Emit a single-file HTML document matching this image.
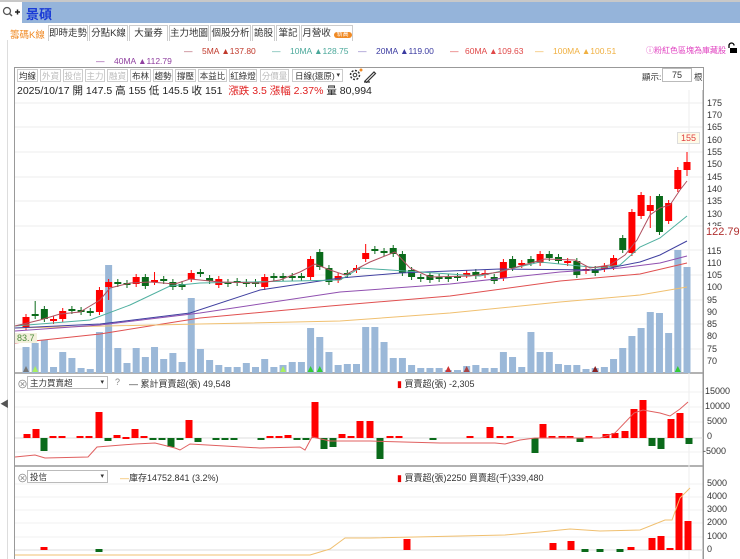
<!DOCTYPE html>
<html><head><meta charset="utf-8">
<style>
*{margin:0;padding:0;box-sizing:border-box}
body{width:740px;height:559px;overflow:hidden;background:#fff;font-family:"Liberation Sans","Noto Sans CJK TC",sans-serif;position:relative;font-size:11px;color:#333}
.abs{position:absolute;white-space:nowrap}
#band{left:0;top:2px;width:740px;height:21px;background:#95b4da}
#srch{left:0;top:2px;width:22px;height:21px;background:#fff}
#title{left:26px;top:4px;font-size:13px;font-weight:bold;color:#1a3bd6}
.tab{position:absolute;top:25px;height:16px;border:1px solid #ccc;border-bottom:none;font-size:9.5px;line-height:15px;text-align:center;color:#333;background:#fff;overflow:hidden}
.tb{position:absolute;top:69px;height:13px;font-size:8.5px;line-height:12px;color:#333;border:1px solid #ccc;text-align:center;background:#fff;overflow:hidden}
.tb.g{color:#bbb}
.ax{position:absolute;font-size:9px;color:#333}
.ma{position:absolute;font-size:8.5px;white-space:nowrap}
</style></head><body>
<div class="abs" style="left:0;top:0;width:740px;height:2px;background:#c8c8c8"></div>
<div class="abs" id="band"></div>
<div class="abs" id="srch"><svg width="22" height="21"><circle cx="7" cy="9" r="3.5" fill="none" stroke="#555" stroke-width="1.3"/><line x1="9.5" y1="11.5" x2="12" y2="14" stroke="#555" stroke-width="1.5"/><path d="M15 10h5M17.5 7.5v5" stroke="#222" stroke-width="1.5"/></svg></div>
<div class="abs" id="title">景碩</div>
<div class="abs" style="left:7px;top:40px;width:1px;height:519px;background:#ddd"></div>

<div class="abs" style="left:10px;top:27px;font-size:9.5px;color:#f08a24">籌碼K線</div>
<div class="tab" style="left:48px;width:40px">即時走勢</div>
<div class="tab" style="left:89px;width:39px">分點K線</div>
<div class="tab" style="left:129px;width:39px">大量券商</div>
<div class="tab" style="left:169px;width:40px">主力地圖</div>
<div class="tab" style="left:210px;width:41px">個股分析</div>
<div class="tab" style="left:252px;width:23px">詭股</div>
<div class="tab" style="left:276px;width:24px">筆記</div>
<div class="tab" style="left:301px;width:52px">月營收 <span style="background:#f08a24;color:#fff;border-radius:6px;font-size:6px;padding:0 3px">新高</span></div>

<div class="ma" style="top:46px;left:184px;color:#b05060">—</div><div class="ma" style="top:46px;left:202px;color:#c0392b">5MA ▲137.80</div>
<div class="ma" style="top:46px;left:272px;color:#4aa89a">—</div><div class="ma" style="top:46px;left:290px;color:#4aa89a">10MA ▲128.75</div>
<div class="ma" style="top:46px;left:358px;color:#8070c0">—</div><div class="ma" style="top:46px;left:376px;color:#3a3aa0">20MA ▲119.00</div>
<div class="ma" style="top:46px;left:450px;color:#e04848">—</div><div class="ma" style="top:46px;left:465px;color:#e04848">60MA ▲109.63</div>
<div class="ma" style="top:46px;left:535px;color:#f0b040">—</div><div class="ma" style="top:46px;left:553px;color:#f0b040">100MA ▲100.51</div>
<div class="ma" style="top:45px;left:646px;color:#e040c0;font-size:8px">ⓘ粉紅色區塊為庫藏股</div>
<svg class="abs" style="left:726px;top:42px" width="12" height="12"><path d="M3 6V3.5a2.5 2.5 0 0 1 5 0" fill="none" stroke="#000" stroke-width="1.3"/><rect x="4" y="6" width="7" height="5" fill="#000"/></svg>
<div class="ma" style="top:56px;left:96px;color:#9040a0">—</div><div class="ma" style="top:56px;left:114px;color:#9040a0">40MA ▲112.79</div>

<div class="abs" style="left:14px;top:67px;width:690px;height:492px;border:1px solid #999;border-bottom:none"></div>
<div class="tb" style="left:17px;width:21px">均線</div><div class="tb g" style="left:40px;width:21px">外資</div><div class="tb g" style="left:63px;width:20px">投信</div><div class="tb g" style="left:85px;width:20px">主力</div><div class="tb g" style="left:107px;width:21px">融資</div><div class="tb" style="left:130px;width:21px">布林</div><div class="tb" style="left:153px;width:20px">趨勢</div><div class="tb" style="left:175px;width:21px">撐壓</div><div class="tb" style="left:198px;width:29px">本益比</div><div class="tb" style="left:229px;width:28px">紅綠燈</div><div class="tb g" style="left:260px;width:29px">分價量</div>
<div class="tb" style="left:292px;width:51px;text-align:left;padding-left:2px">日線(還原)<span style="float:right;padding-right:2px;font-size:7px">▾</span></div>
<svg class="abs" style="left:348px;top:67px" width="30" height="16"><circle cx="7" cy="8" r="4.5" fill="none" stroke="#333" stroke-width="1.5" stroke-dasharray="2 1.5"/><circle cx="7" cy="8" r="1.8" fill="none" stroke="#333"/><circle cx="13" cy="3" r="1.5" fill="#f08a24"/><path d="M17 14l9-9 1.5 1.5-9 9zM16 15h6" stroke="#333" fill="none" stroke-width="1.2"/></svg>
<div class="abs" style="left:642px;top:71px;font-size:8.5px">顯示:</div>
<div class="abs" style="left:662px;top:68px;width:30px;height:14px;border:1px solid #bbb;font-size:9px;text-align:center;line-height:13px">75</div>
<div class="abs" style="left:694px;top:71px;font-size:8.5px">根</div>
<div class="abs" style="left:17px;top:83px;font-size:10.5px;color:#222">2025/10/17 開 147.5 高 155 低 145.5 收 151 &nbsp;<span style="color:#e02020">漲跌 3.5 漲幅 2.37%</span> 量 80,994</div>

<svg class="abs" style="left:0;top:0" width="740" height="559" id="sv"></svg>

<div class="ax" style="left:707px;top:98px">175</div><div class="ax" style="left:707px;top:110px">170</div><div class="ax" style="left:707px;top:122px">165</div><div class="ax" style="left:707px;top:135px">160</div><div class="ax" style="left:707px;top:147px">155</div><div class="ax" style="left:707px;top:159px">150</div><div class="ax" style="left:707px;top:172px">145</div><div class="ax" style="left:707px;top:184px">140</div><div class="ax" style="left:707px;top:196px">135</div><div class="ax" style="left:707px;top:209px">130</div><div class="ax" style="left:707px;top:221px">125</div><div class="ax" style="left:707px;top:258px">110</div><div class="ax" style="left:707px;top:270px">105</div><div class="ax" style="left:707px;top:282px">100</div><div class="ax" style="left:707px;top:295px">95</div><div class="ax" style="left:707px;top:307px">90</div><div class="ax" style="left:707px;top:319px">85</div><div class="ax" style="left:707px;top:331px">80</div><div class="ax" style="left:707px;top:344px">75</div><div class="ax" style="left:707px;top:356px">70</div>
<div class="ax" style="left:707px;top:246px">115</div>
<div class="abs" style="left:706px;top:226px;font-size:11px;color:#b03030;background:#fff">122.79</div>
<div class="abs" style="left:677px;top:132px;font-size:9px;color:#e04040;border:1px solid #ddd;background:#fffbe8;padding:0 3px">155</div>
<div class="abs" style="left:15px;top:333px;font-size:9px;color:#4a8a3a;background:#f3f0dc;padding:0 2px">83.7</div>

<div class="abs" style="left:17px;top:376px;font-size:11px;color:#888">⊗</div>
<div class="abs" style="left:27px;top:376px;width:81px;height:13px;border:1px solid #bbb;font-size:8.5px;line-height:12px;padding-left:2px">主力買賣超 <span style="float:right;padding-right:3px;font-size:7px">▾</span></div>
<div class="abs" style="left:115px;top:377px;font-size:9px;color:#888">?</div>
<div class="abs" style="left:129px;top:377px;font-size:9px">— 累計買賣超(張) 49,548</div>
<div class="abs" style="left:397px;top:377px;font-size:9px"><span style="color:#e00">▮</span> 買賣超(張) -2,305</div>
<div class="ax" style="left:705px;top:386px">15000</div><div class="ax" style="left:705px;top:401px">10000</div><div class="ax" style="left:707px;top:416px">5000</div><div class="ax" style="left:707px;top:431px">0</div><div class="ax" style="left:703px;top:446px">-5000</div>

<div class="abs" style="left:17px;top:470px;font-size:11px;color:#888">⊗</div>
<div class="abs" style="left:27px;top:470px;width:81px;height:13px;border:1px solid #bbb;font-size:8.5px;line-height:12px;padding-left:2px">投信 <span style="float:right;padding-right:3px;font-size:7px">▾</span></div>
<div class="abs" style="left:120px;top:471px;font-size:9px"><span style="color:#f0b040">—</span>庫存14752.841 (3.2%)</div>
<div class="abs" style="left:397px;top:471px;font-size:9px"><span style="color:#e00">▮</span> 買賣超(張)2250 買賣超(千)339,480</div>
<div class="ax" style="left:707px;top:478px">5000</div><div class="ax" style="left:707px;top:491px">4000</div><div class="ax" style="left:707px;top:504px">3000</div><div class="ax" style="left:707px;top:517px">2000</div><div class="ax" style="left:707px;top:531px">1000</div><div class="ax" style="left:707px;top:544px">0</div>
<div class="abs" style="left:0;top:397px;font-size:9px;color:#555">◀</div>

<script>
var s='';
function L(x1,y1,x2,y2,c,w){s+='<line x1="'+x1+'" y1="'+y1+'" x2="'+x2+'" y2="'+y2+'" stroke="'+c+'" stroke-width="'+(w||1)+'"/>';}
function R(x,y,w,h,c){s+='<rect x="'+x+'" y="'+y+'" width="'+w+'" height="'+h+'" fill="'+c+'"/>';}
function P(pts,c,w){s+='<polyline fill="none" stroke="'+c+'" stroke-width="'+(w||1)+'" points="'+pts+'"/>';}
[103,127,152,177,201,226,250,275,300,324,349].forEach(function(y){L(15,y,703,y,'#eee');});
[392,407,422,452].forEach(function(y){L(15,y,703,y,'#f0f0f0');});
[484,497,510,523,537].forEach(function(y){L(15,y,703,y,'#f0f0f0');});
L(703,90,703,559,'#999');L(15,373,703,373,'#999',1.5);L(15,466,703,466,'#999',1.5);
L(689,90,689,559,'#eee');
var vt=[347,343,340,367,352,358,368,369,332,265,348,363,348,357,347,359,353,362,298,349,360,365,367,367,363,367,359,367,365,362,362,328,337,352,365,364,364,327,327,342,358,358,365,368,368,368,370,370,366,365,368,368,352,357,367,332,352,352,364,365,365,369,368,367,359,348,336,328,312,313,333,250,267];
var N=vt.length;function X(i){return 26+i*(687-26)/(N-1);}
for(var i=0;i<N;i++)R(X(i)-3.5,vt[i],7,373-vt[i],'#9bb8d8');
[[0,'#777'],[1,'#aaf060'],[31,'#3c3'],[32,'#3c3'],[46,'#c33'],[71,'#3c3'],[48,'#a44'],[62,'#8a2020'],[28,'#aaf060']].forEach(function(m){s+='<polygon points="'+(X(m[0])-3)+',372 '+(X(m[0])+3)+',372 '+X(m[0])+',366" fill="'+m[1]+'"/>';});
var c=[[317,327,'r'],[314,316,'g',301],[309,319,'g'],[319,321,'r'],[311,319,'r'],[309,311,'g'],[310,312,'g'],[311,313,'g'],[290,312,'r'],[282,287,'r',0,300],[282,284,'g'],[283,285,'g'],[277,284,'r'],[277,286,'g'],[280,282,'r',272],[279,281,'g'],[282,287,'g'],[284,287,'g'],[273,279,'r'],[272,274,'g'],[278,281,'g'],[279,285,'r'],[282,284,'g'],[281,283,'g'],[282,284,'g'],[282,284,'g'],[277,287,'r'],[276,278,'g'],[276,278,'g'],[276,278,'g'],[276,278,'g'],[259,277,'r'],[252,267,'g'],[268,282,'g'],[276,280,'r'],[273,275,'g'],[268,270,'r'],[253,259,'r',244],[249,251,'g'],[251,253,'g'],[248,254,'g'],[254,273,'g'],[270,277,'g'],[277,279,'g'],[275,280,'g'],[277,279,'g'],[277,279,'g'],[276,278,'g'],[273,275,'r'],[272,276,'g'],[273,275,'r'],[277,281,'g'],[262,278,'r'],[259,268,'g'],[263,265,'r'],[259,263,'g'],[254,263,'r'],[254,258,'g'],[257,261,'g'],[261,263,'r'],[261,275,'g'],[269,271,'r'],[269,273,'g'],[266,269,'r'],[258,267,'r'],[238,250,'g'],[212,253,'r'],[195,216,'r'],[205,211,'r',196,228],[196,232,'g',194],[203,221,'r'],[170,189,'r'],[162,170,'r',152,176]];
for(var i=0;i<c.length&&i<N;i++){var d=c[i],x=X(i),col=d[2]=='r'?'#f00':'#0a6a1a';var hi=d[3]||d[0]-3,lo=d[4]||d[1]+3;L(x,hi,x,lo,col);R(x-3.5,d[0],7,Math.max(d[1]-d[0],1.5),col);}
P('15,343 100,334 200,318 330,306 450,296 560,281 640,274 687,263','#e05050');
P('15,328 200,324 340,321 450,313 560,302 640,295 687,287','#f0c070');
P('15,331 100,325 200,313 340,292 450,284 560,272 620,268 660,263 687,256','#9050b0');
P('15,328 100,324 190,313 260,290 340,278 400,273 500,269 600,270 640,262 660,255 687,241','#4040a0');
P('15,326 90,320 130,305 170,286 200,283 340,280 360,268 420,272 480,276 540,262 600,268 620,265 640,247 660,238 687,216','#50b0a0');
P('15,326 40,320 60,314 80,312 100,300 110,288 130,283 150,282 175,284 190,279 220,282 260,283 280,280 300,272 315,264 330,270 345,275 370,262 395,252 410,268 430,277 470,276 500,272 520,266 545,259 575,260 590,268 610,265 625,255 637,240 650,215 660,208 670,205 680,190 687,181','#b05060');
L(15,438,703,438,'#ddd',1);
var p1=[[27,434,'r'],[36,429,'r'],[44,451,'g'],[53,436,'r'],[62,436,'r'],[80,436,'r'],[89,436,'r'],[99,412,'r'],[108,441,'g'],[117,435,'r'],[126,437,'r'],[135,429,'r'],[144,436,'r'],[153,440,'g'],[162,440,'g'],[171,447,'g'],[180,440,'g'],[189,420,'r'],[198,442,'g'],[216,439,'g'],[225,439,'g'],[234,439,'g'],[261,439,'g'],[270,436,'r'],[279,436,'r'],[288,435,'r'],[297,440,'g'],[306,440,'g'],[315,402,'r'],[324,449,'g'],[333,447,'g'],[342,434,'r'],[351,436,'r'],[360,421,'r'],[370,421,'r'],[380,459,'g'],[390,436,'r'],[399,436,'r'],[433,440,'g'],[470,436,'r'],[490,427,'r'],[500,436,'r'],[510,436,'r'],[535,453,'g'],[543,424,'r'],[552,436,'r'],[562,436,'r'],[570,436,'r'],[580,442,'g'],[589,436,'r'],[606,434,'r'],[615,433,'r'],[625,431,'r'],[634,409,'r'],[643,400,'r'],[652,446,'g'],[661,449,'g'],[671,419,'r'],[680,413,'r'],[689,444,'g']];
p1.forEach(function(b){var col=b[2]=='r'?'#f00':'#0a6a1a';var y0=Math.min(b[1],438),h=Math.abs(b[1]-438);R(b[0]-3.5,y0,7,Math.max(h,2),col);});
P('15,457 35,455 45,458 88,457 97,447 135,444 155,443 175,448 180,450 190,444 260,448 300,447 305,450 312,437 330,441 370,441 440,443 495,443 505,444 520,440 535,438 600,438 615,433 634,413 643,410 660,413 670,416 680,409 688,402','#e06060');
L(15,550,703,550,'#ddd',1);
[[44,547],[407,539],[553,543],[571,541],[631,547],[652,538],[661,536],[670,548],[679,493],[688,521]].forEach(function(b){R(b[0]-3.5,b[1],7,550-b[1],'#f00');});
[[99,551],[585,551],[600,551],[620,551]].forEach(function(b){R(b[0]-3.5,549,7,3,'#0a6a1a');});
P('15,555 310,555 330,549 345,538 370,538 505,535 540,532 570,529 600,531 640,530 665,520 672,520 680,498 690,488','#f0c070');
document.getElementById('sv').innerHTML=s;
</script>
</body></html>
